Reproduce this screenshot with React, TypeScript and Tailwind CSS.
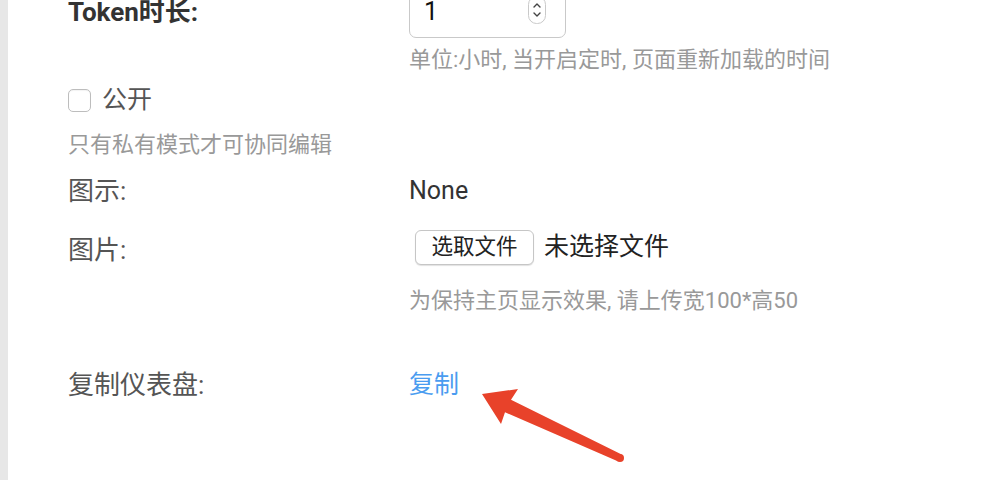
import React from "react";

const font = { fontFamily: '"Roboto", "Noto Sans CJK SC", sans-serif' };

function Label({ children, bold }: { children: React.ReactNode; bold?: boolean }) {
  return (
    <div
      className={
        "w-[341px] shrink-0 text-[26px] " +
        (bold ? "font-bold text-[#333]" : "text-[#555]")
      }
    >
      {children}
    </div>
  );
}

function Spinner() {
  return (
    <svg width="18" height="28" viewBox="0 0 18 28" className="absolute right-[19px] top-[9px]">
      <rect x="0.5" y="0.5" width="17" height="27" rx="8" fill="#fff" stroke="#c9c9c9" />
      <path d="M6 11 L9 8 L12 11" fill="none" stroke="#444" strokeWidth="1.4" strokeLinecap="round" strokeLinejoin="round" />
      <path d="M6 17 L9 20 L12 17" fill="none" stroke="#444" strokeWidth="1.4" strokeLinecap="round" strokeLinejoin="round" />
    </svg>
  );
}

function Arrow() {
  return (
    <svg
      width="986"
      height="480"
      viewBox="0 0 986 480"
      className="absolute left-0 top-0 pointer-events-none"
    >
      <polygon
        points="482,394 518,389 511,399.7 621.7,454.4 618.3,461.6 505,412.3 501,424"
        fill="#e8422a"
      />
      <circle cx="620" cy="458" r="4" fill="#e8422a" />
    </svg>
  );
}

export default function App() {
  return (
    <div className="relative w-[986px] h-[480px] overflow-hidden bg-white flex" style={font}>
      <div className="w-[8px] shrink-0 bg-[#e7e7e7]" />
      <div className="flex-1 pl-[60px] -mt-[14px]">
        <div className="h-[52px] flex items-center">
          <Label bold>Token时长:</Label>
          <div className="relative w-[157px] h-[52px] border border-[#c9c9c9] rounded-[7px] flex items-center pl-[14px] text-[25px] text-[#111]">
            1
            <Spinner />
          </div>
        </div>
        <div className="h-[42px] flex items-center pl-[341px] text-[22px] text-[#999]">
          单位:小时, 当开启定时, 页面重新加载的时间
        </div>
        <div className="h-[40px] flex items-center">
          <span className="w-[23px] h-[23px] rounded-[5px] border border-[#bdbdbd] shadow-[inset_0_1px_1px_rgba(0,0,0,0.05)] bg-white" />
          <span className="ml-[11px] text-[25px] text-[#555]">公开</span>
        </div>
        <div className="h-[48px] flex items-center text-[22px] text-[#999]">
          只有私有模式才可协同编辑
        </div>
        <div className="h-[46px] flex items-center">
          <Label>图示:</Label>
          <span className="text-[25px] text-[#333]">None</span>
        </div>
        <div className="h-[72px] flex items-center">
          <Label>图片:</Label>
          <div className="flex items-center -mt-[6px]">
            <span className="ml-[6px] w-[119px] h-[35px] flex items-center justify-center rounded-[6px] border border-[#c6c6c6] bg-white shadow-[0_1px_1px_rgba(0,0,0,0.12)] text-[21.5px] text-[#222]">
              选取文件
            </span>
            <span className="ml-[10px] text-[25px] text-[#222]">未选择文件</span>
          </div>
        </div>
        <div className="h-[28px] flex items-center pl-[341px] text-[22px] text-[#999]">
          为保持主页显示效果, 请上传宽100*高50
        </div>
        <div className="h-[46px]" />
        <div className="h-[50px] flex items-center">
          <Label>复制仪表盘:</Label>
          <span className="text-[25px] text-[#4a9cf0]">复制</span>
        </div>
      </div>
      <Arrow />
    </div>
  );
}
